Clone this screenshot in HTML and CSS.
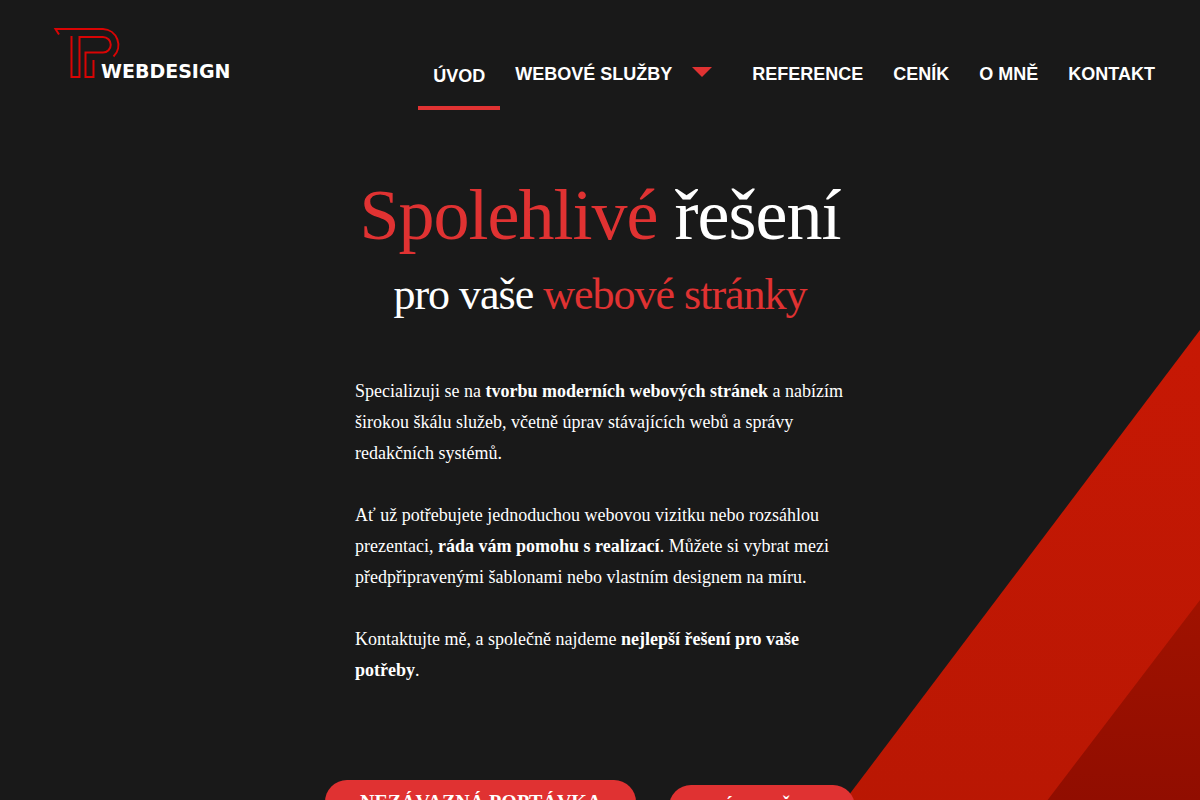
FILE: index.html
```html
<!DOCTYPE html>
<html lang="cs">
<head>
    <meta charset="UTF-8">
    <meta name="viewport" content="width=device-width, initial-scale=1.0">
    <title>TP Webdesign</title>
    <link rel="stylesheet" href="styles.css">
</head>
<body>
    <div class="page">
        <svg class="page-shapes" viewBox="0 0 600 800" aria-hidden="true">
            <defs>
                <linearGradient id="stripe" x1="0" y1="0" x2="0" y2="1">
                    <stop offset="0" stop-color="#c71804"/>
                    <stop offset="0.6" stop-color="#b91703"/>
                    <stop offset="1" stop-color="#ad1502"/>
                </linearGradient>
                <linearGradient id="stripeDark" x1="0" y1="0" x2="0" y2="1">
                    <stop offset="0" stop-color="#a01200"/>
                    <stop offset="0.4" stop-color="#900d00"/>
                    <stop offset="1" stop-color="#800a00"/>
                </linearGradient>
            </defs>
            <polygon points="600,0 600,800 -4,800" fill="url(#stripe)"/>
            <polygon points="600,270 600,800 196,800" fill="url(#stripeDark)"/>
        </svg>

        <header class="header">
            <a href="#" class="logo" aria-label="TP Webdesign">
                <svg width="184" height="56" viewBox="50 25 184 56">
                    <g fill="none" stroke="#d90404" stroke-width="2">
                        <path d="M59 34.5 L55.5 29 H103 A16 16 0 0 1 113.5 56.5"/>
                        <path d="M71.5 36 V77 H79.5 V37 H103 A7.5 7.5 0 0 1 103 52.5 H85.5 V77 H93.5 V60"/>
                    </g>
                    <text class="logo-text" x="101" y="78">WEBDESIGN</text>
                </svg>
            </a>
            <nav class="nav">
                <ul class="menu">
                    <li><a href="#" class="menu-link active">ÚVOD</a></li>
                    <li><a href="#" class="menu-link has-submenu">WEBOVÉ SLUŽBY</a></li>
                    <li><a href="#" class="menu-link">REFERENCE</a></li>
                    <li><a href="#" class="menu-link">CENÍK</a></li>
                    <li><a href="#" class="menu-link">O MNĚ</a></li>
                    <li><a href="#" class="menu-link">KONTAKT</a></li>
                </ul>
            </nav>
        </header>

        <main class="hero">
            <h1><span class="accent">Spolehlivé</span> řešení</h1>
            <h2>pro vaše <span class="accent">webové stránky</span></h2>

            <div class="hero-text">
                <p>Specializuji se na <strong>tvorbu moderních webových stránek</strong> a nabízím širokou škálu služeb, včetně úprav stávajících webů a správy redakčních systémů.</p>
                <p>Ať už potřebujete jednoduchou webovou vizitku nebo rozsáhlou prezentaci, <strong>ráda vám pomohu s realizací</strong>. Můžete si vybrat mezi předpřipravenými šablonami nebo vlastním designem na míru.</p>
                <p>Kontaktujte mě, a společně najdeme <strong>nejlepší řešení pro vaše potřeby</strong>.</p>
            </div>

            <div class="hero-buttons">
                <a href="#" class="btn">NEZÁVAZNÁ POPTÁVKA</a>
                <a href="#" class="btn btn-secondary">MÉ SLUŽBY</a>
            </div>
        </main>
    </div>
</body>
</html>
```

FILE: styles.css
```css
* {
    margin: 0;
    padding: 0;
    box-sizing: border-box;
}

body {
    font-family: "Liberation Serif", "Times New Roman", serif;
    background: #191919;
    color: #fff;
}

a {
    color: inherit;
    text-decoration: none;
}

.page {
    position: relative;
    min-height: 100vh;
    overflow: hidden;
}

/* red stripes behind the content */
.page-shapes {
    position: absolute;
    top: 330px;
    right: 0;
    width: 600px;
    overflow: visible;
}

.header {
    position: relative;
    display: flex;
    justify-content: space-between;
    align-items: flex-start;
    padding: 25px 30px 0 50px;
}

.logo svg {
    display: block;
}

.logo-text {
    font-family: "DejaVu Sans", sans-serif;
    font-size: 19px;
    font-weight: 700;
    fill: #fff;
}

.nav {
    padding-top: 13px;
}

.menu {
    display: flex;
    align-items: center;
    list-style: none;
}

.menu-link {
    display: flex;
    align-items: center;
    padding: 0 15px;
    font-family: "Liberation Sans", Arial, sans-serif;
    font-size: 18px;
    font-weight: 700;
    line-height: 20px;
}

.menu-link:hover {
    color: #e03232;
}

.menu-link.active {
    padding-top: 28px;
    padding-bottom: 20px;
    border-bottom: 4px solid #e03232;
}

.has-submenu::after {
    content: "";
    margin: 0 10px 4px 20px;
    border: 10px solid transparent;
    border-top-color: #e03232;
    border-bottom: 0;
}

.hero {
    position: relative;
    max-width: 550px;
    margin: 0 auto;
    padding: 65px 0 80px;
}

h1,
h2 {
    font-weight: 400;
    letter-spacing: -1px;
    text-align: center;
}

h1 {
    font-size: 72px;
    line-height: 80px;
}

h2 {
    margin-top: 15px;
    font-size: 44px;
    line-height: 50px;
}

.accent {
    color: #e03232;
}

.hero-text {
    display: grid;
    gap: 31px;
    padding: 56px 30px 0;
    font-size: 18px;
    line-height: 31px;
}

.hero-buttons {
    display: flex;
    flex-wrap: wrap;
    align-items: flex-start;
    gap: 33px;
    margin-top: 94px;
}

.btn {
    padding: 10px 35px;
    background: #e03232;
    border-radius: 25px;
    font-size: 20px;
    font-weight: 700;
    line-height: 24px;
}

.btn:hover {
    background: #c71804;
}

.btn-secondary {
    margin-top: 5px;
    padding: 10px 34px;
}
```
